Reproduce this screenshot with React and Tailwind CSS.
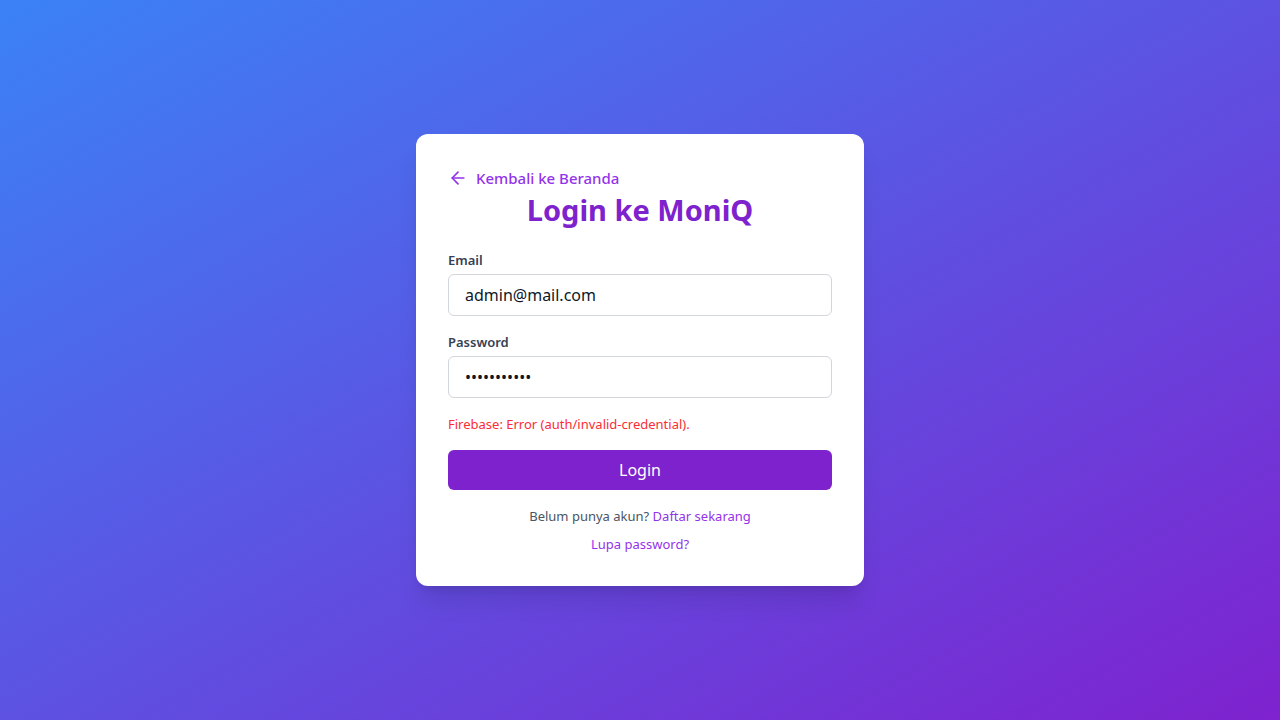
import { ArrowLeft } from "lucide-react";

const App = () => {
  return (
    <div
      className="min-h-screen w-full flex items-center justify-center bg-[linear-gradient(to_bottom_right,#3b82f6,#7e22ce)]"
      style={{ fontFamily: '"Noto Sans", "Open Sans", sans-serif' }}
    >
      <div className="w-[448px] bg-white rounded-xl shadow-xl p-8">
        {/* Back link */}
        <a className="flex items-center gap-2 text-[#9333ea] font-medium text-[15px] leading-6">
          <ArrowLeft className="w-5 h-5" strokeWidth={2} />
          Kembali ke Beranda
        </a>

        <h1 className="text-[29px] leading-9 font-bold text-[#7e22ce] text-center mt-0.5 mb-[22px]">
          Login ke MoniQ
        </h1>

        <form className="flex flex-col">
          <label className="text-[13px] leading-5 font-semibold text-gray-700 mb-1">
            Email
          </label>
          <input
            type="email"
            defaultValue="admin@mail.com"
            className="h-[42px] w-full rounded-md border border-gray-300 px-4 text-base text-gray-900 outline-none"
          />

          <label className="text-[13px] leading-5 font-semibold text-gray-700 mb-1 mt-4">
            Password
          </label>
          <input
            type="password"
            defaultValue="password123"
            className="h-[42px] w-full rounded-md border border-gray-300 px-4 text-base text-gray-900 outline-none"
          />

          <p className="text-[13px] leading-5 text-red-500 mt-4">
            Firebase: Error (auth/invalid-credential).
          </p>

          <button
            type="button"
            className="mt-4 h-10 w-full rounded-md bg-[#7e22ce] text-white text-base"
          >
            Login
          </button>
        </form>

        <p className="mt-4 text-[13px] leading-5 text-gray-600 text-center">
          Belum punya akun? <a className="text-[#9333ea]">Daftar sekarang</a>
        </p>
        <p className="mt-2 text-[13px] leading-5 text-center">
          <a className="text-[#9333ea]">Lupa password?</a>
        </p>
      </div>
    </div>
  );
};

export default App;
